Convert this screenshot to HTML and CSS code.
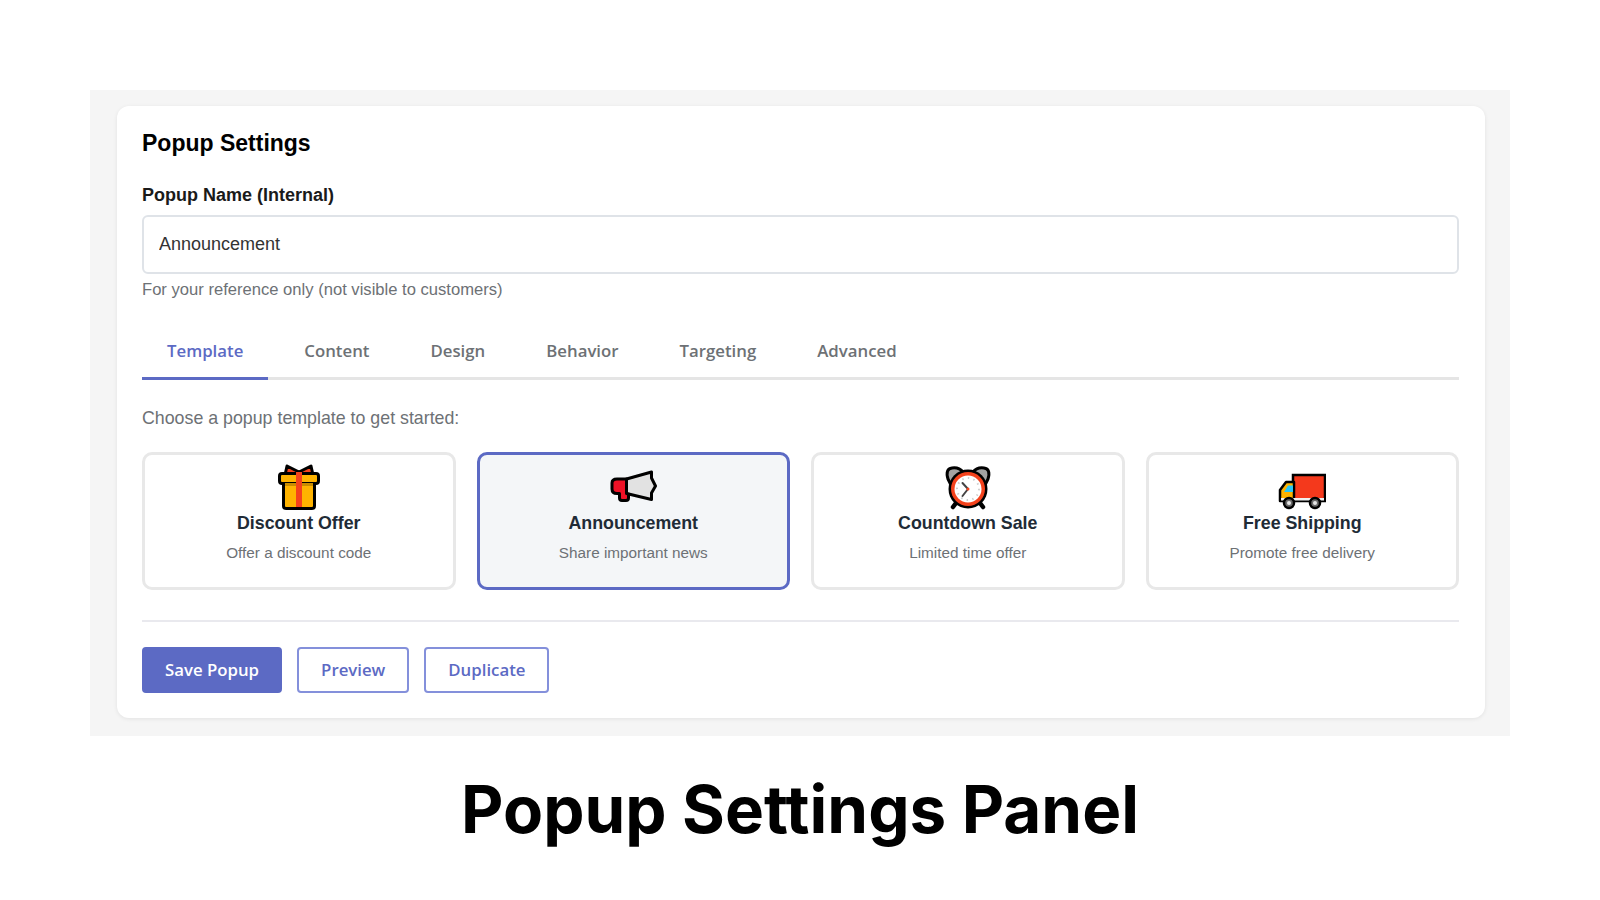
FILE: index.html
```html
<!DOCTYPE html>
<html lang="en">
<head>
  <meta charset="UTF-8">
  <title>Popup Settings Panel</title>
  <link rel="stylesheet" href="styles.css">
</head>
<body>
  <div class="panel">
    <div class="card">
      <h2>Popup Settings</h2>
      <label class="field-label" for="popup-name">Popup Name (Internal)</label>
      <input class="field-input" id="popup-name" type="text" value="Announcement">
      <div class="hint">For your reference only (not visible to customers)</div>

      <!-- Tabs -->
      <div class="tabs">
        <div class="tab active">Template</div>
        <div class="tab">Content</div>
        <div class="tab">Design</div>
        <div class="tab">Behavior</div>
        <div class="tab">Targeting</div>
        <div class="tab">Advanced</div>
      </div>

      <p class="intro">Choose a popup template to get started:</p>

      <!-- Templates -->
      <div class="templates">
        <div class="template">
          <svg class="icon" viewBox="0 0 48 46" width="48" height="46">
            <path d="M12 2 L24 8 L36 2 L38 11 L10 11 Z" fill="#f4421c" stroke="#000" stroke-width="3" stroke-linejoin="round"/>
            <rect x="8.5" y="17" width="31" height="27.5" rx="2.5" fill="#ffb300" stroke="#000" stroke-width="3"/>
            <rect x="4.5" y="9.5" width="39" height="10" rx="2.5" fill="#ffb300" stroke="#000" stroke-width="3"/>
            <rect x="10" y="19" width="28" height="3" fill="#c98c00"/>
            <rect x="21" y="8" width="6" height="35" fill="#f4421c"/>
          </svg>
          <div class="template-name">Discount Offer</div>
          <div class="template-desc">Offer a discount code</div>
        </div>
        <div class="template selected">
          <svg class="icon" viewBox="0 0 48 46" width="48" height="46">
            <path d="M17.5 15 L42.5 8 L42.5 14 L46.5 22 L42.5 29 L42.5 35.5 L17.5 29.5 Z" fill="#e2e2e2" stroke="#000" stroke-width="3" stroke-linejoin="round"/>
            <path d="M17.5 15 L8 15 Q3 15 3 19 L3 25 Q3 29.5 8 29.5 L10.5 29.5 L10.5 34 Q10.5 36.5 13 36.5 L17 36.5 Q19.5 36.5 19.5 34 L19.5 30 L17.5 29.5 Z" fill="#ee1126" stroke="#000" stroke-width="3" stroke-linejoin="round"/>
          </svg>
          <div class="template-name">Announcement</div>
          <div class="template-desc">Share important news</div>
        </div>
        <div class="template">
          <svg class="icon" viewBox="0 0 48 46" width="48" height="46">
            <path d="M4 15 Q1 5 8 4 Q15 3 19 8 L7 21 Z" fill="#a3a3a3" stroke="#000" stroke-width="3" stroke-linejoin="round"/>
            <path d="M44 15 Q47 5 40 4 Q33 3 29 8 L41 21 Z" fill="#a3a3a3" stroke="#000" stroke-width="3" stroke-linejoin="round"/>
            <path d="M12 39 L9 43 M36 39 L39 43" stroke="#000" stroke-width="4.5" stroke-linecap="round"/>
            <circle cx="24" cy="25" r="19.5" fill="#000"/>
            <circle cx="24" cy="25" r="17" fill="#f4421c"/>
            <circle cx="24" cy="25" r="13.5" fill="#fff"/>
            <circle cx="24" cy="25" r="11" fill="none" stroke="#cfcfcf" stroke-width="2" stroke-dasharray="1.5 4.2"/>
            <path d="M24 25 L18.5 19 M24 25 L18.5 32" stroke="#444" stroke-width="2" stroke-linecap="round"/>
            <circle cx="24" cy="25" r="1.5" fill="#f4421c"/>
          </svg>
          <div class="template-name">Countdown Sale</div>
          <div class="template-desc">Limited time offer</div>
        </div>
        <div class="template">
          <svg class="icon" viewBox="0 0 48 46" width="48" height="46">
            <rect x="15" y="11" width="32" height="26" fill="#f4391c" stroke="#000" stroke-width="2.5"/>
            <path d="M15.5 18 L8 18 L2 26 L2 37 L16 37 L16 18 Z" fill="#ffb300" stroke="#000" stroke-width="2.5" stroke-linejoin="round"/>
            <path d="M10 21.5 L15 21.5 L15 28 L6 28 Z" fill="#29c5f6"/>
            <rect x="3" y="34" width="43" height="2.5" fill="#f0f0f0"/>
            <circle cx="11" cy="39" r="5" fill="#6a6a6a" stroke="#000" stroke-width="2.5"/>
            <circle cx="37" cy="39" r="5" fill="#6a6a6a" stroke="#000" stroke-width="2.5"/>
            <circle cx="11" cy="39" r="2" fill="#e5e5e5"/>
            <circle cx="37" cy="39" r="2" fill="#e5e5e5"/>
          </svg>
          <div class="template-name">Free Shipping</div>
          <div class="template-desc">Promote free delivery</div>
        </div>
      </div>

      <!-- Actions -->
      <div class="actions">
        <button class="btn btn-primary">Save Popup</button>
        <button class="btn">Preview</button>
        <button class="btn">Duplicate</button>
      </div>
    </div>
  </div>
  <h1 class="caption">Popup Settings Panel</h1>
</body>
</html>
```

FILE: styles.css
```css
* {
  margin: 0;
  padding: 0;
  box-sizing: border-box;
}

body {
  font-family: 'Liberation Sans', Arial, sans-serif;
  background: #ffffff;
  height: 100vh;
  padding: 90px 90px 0;
  overflow: hidden;
}

.panel {
  background: #f5f5f5;
  height: 646px;
  padding: 16px 25px 18px 27px;
}

.card {
  background: #ffffff;
  border-radius: 12px;
  height: 612px;
  padding: 25px 26px 25px 25px;
  box-shadow: 0 1px 4px rgba(0, 0, 0, 0.08);
}

h2 {
  font-size: 23px;
  line-height: 24px;
  color: #000000;
  margin-bottom: 30px;
}

.field-label {
  display: block;
  font-size: 18px;
  font-weight: bold;
  line-height: 20px;
  color: #1a1a1a;
  margin-bottom: 10px;
}

.field-input {
  display: block;
  width: 100%;
  height: 59px;
  padding: 0 15px;
  border: 2px solid #dfe3e8;
  border-radius: 6px;
  background: #ffffff;
  color: #333333;
  font-family: inherit;
  font-size: 18px;
}

.hint {
  font-size: 16.6px;
  line-height: 20px;
  color: #6d7175;
  margin-top: 6px;
}

.tabs {
  display: flex;
  border-bottom: 3px solid #e5e5e5;
  margin-top: 21px;
  height: 59px;
}

.tab {
  height: 59px;
  padding: 0 25px;
  line-height: 59px;
  font-family: 'Open Sans', sans-serif;
  font-size: 16.8px;
  font-weight: 600;
  color: #6d7175;
  margin-right: 11px;
}

.tab.active {
  color: #5c6ac4;
  border-bottom: 3px solid #5c6ac4;
}

.intro {
  font-size: 17.8px;
  line-height: 20px;
  color: #6d7175;
  margin-top: 28px;
}

.templates {
  display: grid;
  grid-template-columns: repeat(4, 1fr);
  gap: 21px;
  margin-top: 24px;
  padding-bottom: 30px;
  border-bottom: 2px solid #e9e9ee;
}

.template {
  height: 138px;
  border: 3px solid #e8e8e8;
  border-radius: 10px;
  text-align: center;
}

.template.selected {
  border-color: #5c6ac4;
  background: #f4f6f8;
}

.icon {
  display: block;
  margin: 9px auto 0;
}

.template-name {
  font-size: 17.8px;
  font-weight: bold;
  line-height: 20px;
  color: #212b36;
  margin-top: 3px;
}

.template-desc {
  font-size: 15.3px;
  line-height: 20px;
  color: #6d7175;
  margin-top: 10px;
}

.actions {
  display: flex;
  gap: 15px;
  margin-top: 25px;
}

.btn {
  height: 46px;
  padding: 0 22px 2px;
  border: 2px solid #8490db;
  border-radius: 4px;
  background: #ffffff;
  color: #5c6ac4;
  font-family: 'Open Sans', sans-serif;
  font-size: 16.8px;
  font-weight: 600;
}

.btn-primary {
  padding: 0 21px 2px;
  background: #5c6ac4;
  border-color: #5c6ac4;
  color: #ffffff;
}

.caption {
  font-family: 'Inter', sans-serif;
  font-size: 65.5px;
  font-weight: 700;
  line-height: 80px;
  color: #000000;
  text-align: center;
  margin-top: 34px;
}
```
